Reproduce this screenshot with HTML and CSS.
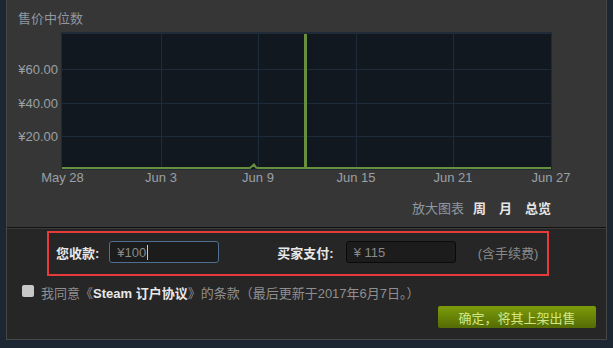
FILE: index.html
```html
<!DOCTYPE html>
<html lang="zh-CN">
<head>
    <meta charset="UTF-8">
    <title>出售物品</title>
    <link rel="stylesheet" href="styles.css">
</head>
<body>
    <div class="panel">
        <div class="chart-section">
            <div class="chart-title">售价中位数</div>
            <svg class="chart" width="599" height="160" viewBox="0 0 599 160">
                <rect x="54" y="2" width="491" height="138" fill="#1e2a38"/>
                <rect x="55" y="4" width="489" height="135" fill="#111820"/>
                <g stroke="#1e2b3a" stroke-width="1">
                    <line x1="55" y1="39.5" x2="544" y2="39.5"/>
                    <line x1="55" y1="73.5" x2="544" y2="73.5"/>
                    <line x1="55" y1="106.5" x2="544" y2="106.5"/>
                    <line x1="154.5" y1="4" x2="154.5" y2="139"/>
                    <line x1="251.5" y1="4" x2="251.5" y2="139"/>
                    <line x1="349.5" y1="4" x2="349.5" y2="139"/>
                    <line x1="446.5" y1="4" x2="446.5" y2="139"/>
                </g>
                <polyline points="55,138 243,138 247,134.5 249,137.5 251,138 297,138 300,138 544,138" fill="none" stroke="#688f3e" stroke-width="2"/>
                <rect x="297" y="4" width="3" height="135" fill="#688f3e"/>
                <g class="axis-y">
                    <text x="51" y="43.5">¥60.00</text>
                    <text x="51" y="77.5">¥40.00</text>
                    <text x="51" y="110.5">¥20.00</text>
                </g>
                <g class="axis-x">
                    <text x="55.5" y="152">May 28</text>
                    <text x="154" y="152">Jun 3</text>
                    <text x="251" y="152">Jun 9</text>
                    <text x="349" y="152">Jun 15</text>
                    <text x="446" y="152">Jun 21</text>
                    <text x="544" y="152">Jun 27</text>
                </g>
            </svg>
            <div class="zoom-row">
                <span class="zoom-label">放大图表</span>
                <a class="zoom-link">周</a>
                <a class="zoom-link">月</a>
                <a class="zoom-link">总览</a>
            </div>
        </div>

        <div class="sell-section">
            <div class="fee-box">
                <span class="fee-label">您收款:</span>
                <div class="price-input active">¥100<span class="caret"></span></div>
                <span class="fee-label buyer">买家支付:</span>
                <div class="price-input">¥ 115</div>
                <span class="fee-note">(含手续费)</span>
            </div>

            <label class="agree-row">
                <span class="checkbox"></span>
                <span>我同意《<b>Steam 订户协议</b>》的条款（最后更新于2017年6月7日。）</span>
            </label>

            <div class="actions">
                <button class="sell-btn">确定，将其上架出售</button>
            </div>
        </div>
    </div>
</body>
</html>
```

FILE: styles.css
```css
/* Диалог продажи предмета */
body {
    margin: 0;
    background-color: #1d2733;
    font-family: "Liberation Sans", Arial, "Noto Sans CJK SC", sans-serif;
    font-size: 13px;
    color: #8f98a0;
}

.panel {
    margin-left: 6px;
    width: 601px;
    box-sizing: border-box;
    border-left: 1px solid #474747;
    border-right: 1px solid #474747;
    border-bottom: 1px solid #474747;
}

.chart-section {
    height: 228px;
    box-sizing: border-box;
    background-color: #363636;
    border-bottom: 1px solid #121212;
}

.chart-title {
    height: 30px;
    box-sizing: border-box;
    padding: 11px 0 0 11px;
    line-height: 16px;
    color: #8f98a0;
}

.chart {
    display: block;
}

.chart text {
    font-family: "Liberation Sans", Arial, sans-serif;
    font-size: 13px;
    fill: #9aa0a6;
}

.axis-y text {
    text-anchor: end;
}

.axis-x text {
    text-anchor: middle;
}

.zoom-row {
    display: flex;
    justify-content: flex-end;
    margin-top: 11px;
    padding-right: 55px;
    line-height: 16px;
}

.zoom-label {
    margin-right: 9px;
    color: #8f98a0;
}

.zoom-link {
    margin-left: 13px;
    color: #e6e6e6;
    font-weight: bold;
    cursor: pointer;
}

.zoom-label + .zoom-link {
    margin-left: 0;
}

.sell-section {
    height: 111px;
    box-sizing: border-box;
    background-color: #262626;
    border-top: 1px solid #3a3a3a;
    padding-top: 2px;
}

.fee-box {
    display: flex;
    align-items: center;
    margin-left: 40px;
    width: 502px;
    height: 45px;
    box-sizing: border-box;
    border: 2px solid #e8393b;
    padding: 0 0 3px 7px;
}

.fee-label {
    margin-right: 10px;
    color: #e8e8e8;
    font-weight: bold;
}

.fee-label.buyer {
    margin-left: 58px;
    margin-right: 12px;
}

.price-input {
    display: flex;
    align-items: center;
    width: 110px;
    height: 22px;
    box-sizing: border-box;
    padding-left: 7px;
    background-color: #1c1c1c;
    border: 1px solid #0a0a0a;
    border-radius: 3px;
    color: #8a8a8a;
}

.price-input.active {
    border-color: #4d6f92;
}

.caret {
    width: 1px;
    height: 15px;
    margin-left: 1px;
    background-color: #c8c8c8;
}

.fee-note {
    margin-left: 22px;
    color: #8a8a8a;
}

.agree-row {
    display: flex;
    margin-top: 10px;
    padding-left: 15px;
    line-height: 16px;
    color: #8f8f8f;
}

.agree-row b {
    color: #e8e8e8;
}

.checkbox {
    width: 12px;
    height: 12px;
    margin-top: -1px;
    margin-right: 7px;
    background-color: #c8c8c8;
    border-radius: 2px;
}

.actions {
    display: flex;
    justify-content: flex-end;
    margin-top: 4px;
    padding-right: 10px;
}

.sell-btn {
    width: 158px;
    height: 22px;
    padding: 0;
    border: none;
    border-radius: 2px;
    background: linear-gradient(to bottom, #7a9a0a 5%, #566d05 95%);
    color: #d2e885;
    font-family: "Liberation Sans", Arial, "Noto Sans CJK SC", sans-serif;
    font-size: 13px;
    cursor: pointer;
}
```
